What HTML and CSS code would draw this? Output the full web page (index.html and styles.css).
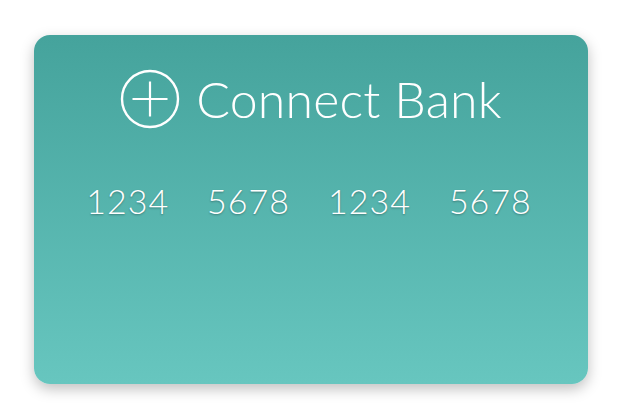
FILE: index.html
```html
<!DOCTYPE html>
<html>
<head>
<meta charset="utf-8">
<link rel="stylesheet" href="styles.css">
</head>
<body>
<div class="card">
  <div class="title">
    <svg class="icon" width="60" height="60" viewBox="0 0 60 60">
      <circle cx="30" cy="30" r="28" fill="none" stroke="#fff" stroke-width="2.4"/>
      <line x1="12.5" y1="30" x2="47.5" y2="30" stroke="#fff" stroke-width="2.2"/>
      <line x1="30" y1="12.5" x2="30" y2="47.5" stroke="#fff" stroke-width="2.2"/>
    </svg>
    <span class="label">Connect Bank</span>
  </div>
  <div class="number">
    <span>1234</span><span>5678</span><span>1234</span><span>5678</span>
  </div>
</div>
</body>
</html>
```
FILE: styles.css
```css
html, body { margin: 0; padding: 0; background: #fff; }
body { width: 626px; height: 420px; padding: 35px 0 0 34px; box-sizing: border-box; }
.card {
  width: 554px;
  height: 349px;
  border-radius: 16px;
  background: linear-gradient(#45a39c, #67c6bf);
  box-shadow: 0 5px 14px rgba(0,0,0,0.25);
  box-sizing: border-box;
  padding-top: 34px;
  font-family: "Lato", sans-serif;
  color: #fff;
}
.title {
  display: flex;
  align-items: center;
  justify-content: center;
  gap: 16px;
  height: 60px;
}
.icon { display: block; }
.label { font-size: 50px; font-weight: 300; letter-spacing: 0.2px; line-height: 60px; }
.number {
  display: flex;
  justify-content: center;
  gap: 38px;
  margin-top: 52px;
  padding-right: 4px;
  font-size: 34px;
  font-weight: 300;
  letter-spacing: 1px;
  line-height: 40px;
  text-shadow: 0 1px 2px rgba(0,0,0,0.3);
}
```
